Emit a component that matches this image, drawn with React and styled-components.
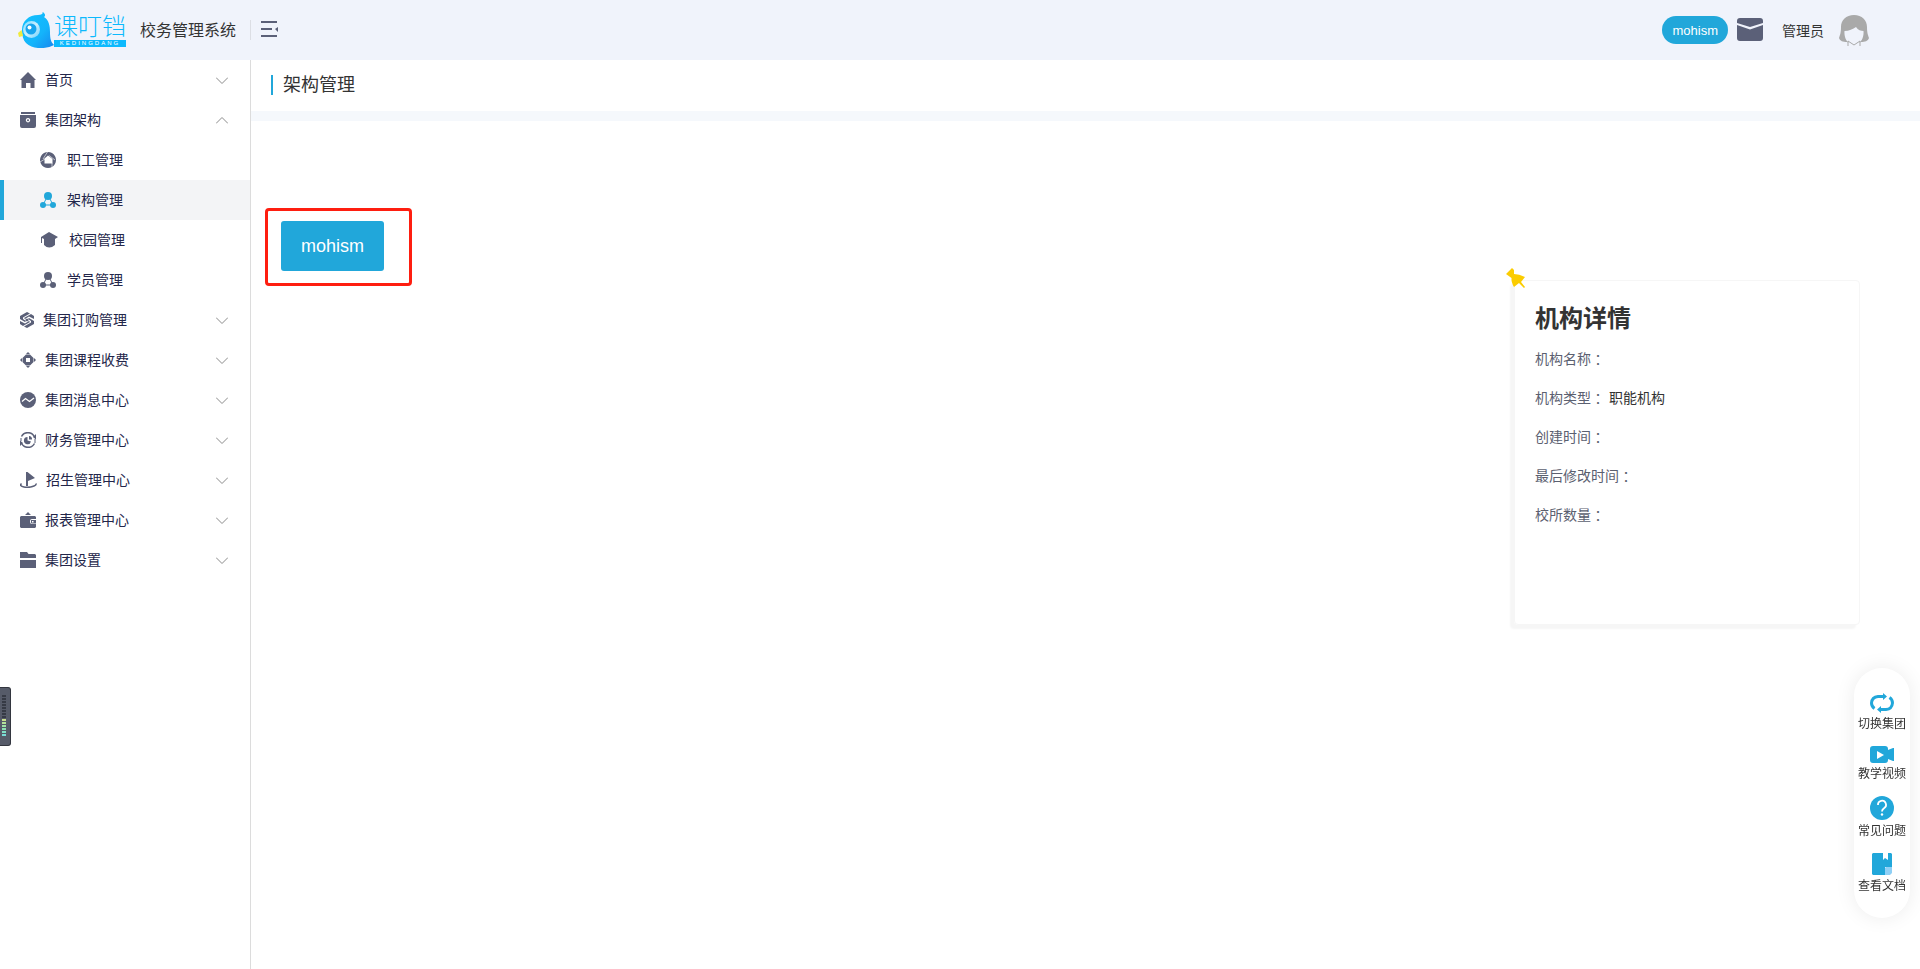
import React, { useState } from 'react'
import styled, { createGlobalStyle } from 'styled-components'

const accent = '#21a7da';
const slate = '#5b6078';

//Styled-components

const GlobalStyle = createGlobalStyle`
    * {
        box-sizing: border-box;
    }
    body {
        margin: 0;
        background: #fff;
        color: #333;
        font-family: 'Liberation Sans', 'Noto Sans CJK SC', sans-serif;
        font-size: 14px;
        font-weight: 400;
    }
    button {
        font: inherit;
        color: inherit;
        border: 0;
        margin: 0;
        padding: 0;
        background: none;
        cursor: pointer;
    }
    a {
        color: inherit;
        text-decoration: none;
    }
    svg {
        display: block;
        flex: none;
    }
`;

const Page = styled.div`
    min-height: 100vh;
    display: flex;
    flex-direction: column;
`;

const Header = styled.header`
    height: 60px;
    padding: 0 51px 0 18px;
    display: flex;
    align-items: center;
    justify-content: space-between;
    background: #f0f3fb;
`;

const HeaderGroup = styled.div`
    display: flex;
    align-items: center;
`;

const Logo = styled.a`
    display: flex;
    align-items: center;
`;

const LogoWords = styled.div`
    display: flex;
    flex-direction: column;
    color: #0db9fd;
`;

const LogoName = styled.span`
    font-size: 24px;
    line-height: 26px;
    font-weight: 300;
`;

const LogoLatin = styled.span`
    height: 7px;
    background: #0db9fd;
    color: #fff;
    font-size: 6px;
    line-height: 7px;
    display: flex;
    justify-content: center;
    letter-spacing: 2px;
`;

const SystemName = styled.span`
    margin-left: 14px;
    padding-top: 2px;
    font-size: 16px;
    line-height: 20px;
`;

const Divider = styled.span`
    width: 1px;
    height: 20px;
    margin: 0 10px 0 14px;
    background: #dcdee4;
`;

const Pill = styled.button`
    height: 28px;
    padding: 0 10px;
    border-radius: 14px;
    background: ${accent};
    color: #fff;
    font-size: 13px;
`;

const IconButton = styled.button`
    margin-left: ${props => props.$gap || 0}px;
    padding-bottom: 2px;
`;

const UserName = styled.span`
    margin: 0 15px 0 19px;
    padding-top: 1px;
    line-height: 20px;
`;

const Body = styled.div`
    flex: 1;
    display: flex;
`;

const Sidebar = styled.nav`
    width: 251px;
    flex: none;
    border-right: 1px solid #dcdcdc;
`;

const MenuItem = styled.button`
    width: 100%;
    height: 40px;
    padding: 0 22px 0 20px;
    display: flex;
    align-items: center;
    color: #23264a;
`;

const MenuText = styled.span`
    flex: 1;
    margin-left: 9px;
    text-align: left;
    line-height: 20px;
`;

const SubItem = styled.a`
    height: 40px;
    padding-left: 36px;
    display: flex;
    align-items: center;
    border-left: 4px solid ${props => (props.$active ? accent : 'transparent')};
    background: ${props => (props.$active ? '#f3f4f6' : 'none')};
    color: #23264a;
    svg {
        color: ${props => (props.$active ? accent : slate)};
    }
    span {
        margin-left: 11px;
        line-height: 20px;
    }
`;

const Main = styled.main`
    flex: 1;
    min-width: 0;
`;

const TitleBar = styled.div`
    height: 61px;
    padding: 15px 20px 0;
    border-bottom: 10px solid #f5f8fc;
`;

const Title = styled.h1`
    margin: 0;
    padding-left: 10px;
    border-left: 2px solid ${accent};
    font-size: 18px;
    line-height: 20px;
    font-weight: 400;
`;

const Content = styled.div`
    padding: 87px 60px 40px 14px;
    display: flex;
    justify-content: space-between;
    align-items: flex-start;
`;

const Highlight = styled.div`
    padding: 10px 25px 12px 13px;
    border: 3px solid #fe1e10;
    border-radius: 4px;
`;

const OrgNode = styled.button`
    height: 50px;
    padding: 0 20px;
    border-radius: 3px;
    background: ${accent};
    color: #fff;
    font-size: 18px;
`;

const Card = styled.section`
    position: relative;
    width: 346px;
    min-height: 345px;
    margin-top: 72px;
    padding: 20px;
    border: 1px solid #f6f6f6;
    border-radius: 4px;
    box-shadow: -4px 4px 2px #f6f6f6;
`;

const Pin = styled.div`
    position: absolute;
    top: -13px;
    left: -9px;
`;

const CardTitle = styled.h2`
    margin: 0 0 12px;
    font-size: 24px;
    line-height: 36px;
    font-weight: 700;
`;

const Details = styled.dl`
    margin: 0;
`;

const DetailRow = styled.div`
    display: flex;
    margin-bottom: 19px;
    line-height: 20px;
`;

const Label = styled.dt`
    display: flex;
    color: #5b6070;
    margin-right: 4px;
`;

// the TC face centres the full-width colon
const Colon = styled.span`
    font-family: 'Noto Sans CJK TC', sans-serif;
`;

const Value = styled.dd`
    margin: 0;
`;

const Tools = styled.aside`
    position: fixed;
    right: 10px;
    bottom: 51px;
    width: 56px;
    padding: 25px 0 23px;
    display: flex;
    flex-direction: column;
    gap: 13px;
    border-radius: 28px;
    background: #fff;
    box-shadow: 0 0 20px rgba(0, 0, 0, 0.08);
`;

const Tool = styled.button`
    display: flex;
    flex-direction: column;
    align-items: center;
    gap: 2px;
    font-size: 12px;
    line-height: 18px;
`;

const Meter = styled.div`
    position: fixed;
    left: 0;
    bottom: 223px;
    width: 11px;
    height: 59px;
    padding: 7px 4px 0 2px;
    display: flex;
    flex-direction: column;
    gap: 1px;
    border: 1px solid #33363f;
    border-left: 0;
    border-radius: 0 3px 3px 0;
    background: #565b69;
`;

const Tick = styled.span`
    height: 2px;
    background: ${props => props.$color};
`;

//ICONS

const Icon = ({ w = 16, h = 16, color = slate, children }) => (
    <svg width={w} height={h} viewBox={`0 0 ${w} ${h}`} fill={color} aria-hidden='true'>{children}</svg>
)

const Bird = () => (
    <svg width='36' height='36' viewBox='0 0 36 36' aria-hidden='true'>
        <defs>
            <linearGradient id='bird' x1='0' y1='0' x2='1' y2='1'>
                <stop offset='0' stopColor='#12c3ff' />
                <stop offset='0.6' stopColor='#14b4fb' />
                <stop offset='1' stopColor='#1886ee' />
            </linearGradient>
            <linearGradient id='face' x1='0' y1='0' x2='1' y2='1'>
                <stop offset='0' stopColor='#7fdcff' />
                <stop offset='0.5' stopColor='#c9efff' />
                <stop offset='1' stopColor='#6fd0fb' />
            </linearGradient>
        </defs>
        <path d='M4 18C4 9 11 3 20 3C24 3 25 2 24.5 0C27 1 28 4 26 5C31 8 32 14 32 20C32 27 33 30 36 33C29 37 15 38 8 31C5 28 4 23 4 18Z' fill='url(#bird)' />
        <circle cx='13.5' cy='17.5' r='8.5' fill='url(#face)' />
        <circle cx='13' cy='17' r='5.5' fill='#16a4ee' />
        <circle cx='11.5' cy='15.5' r='2' fill='#fff' />
        <path d='M3.5 18L0 21L1 25L5 24Z' fill='#f0ea3c' />
    </svg>
)

const FoldIcon = () => (
    <Icon w={17} h={16}>
        <path d='M0 0h16v2H0zM0 7h11v2H0zM0 14h16v2H0zM17 6v5l-3-3z' />
    </Icon>
)

const MailIcon = () => (
    <Icon w={26} h={23}>
        <path d='M3 0h20a3 3 0 0 1 3 3v2L13 9L0 5V3a3 3 0 0 1 3-3zM0 7l13 4.5L26 7v13a3 3 0 0 1-3 3H3a3 3 0 0 1-3-3z' />
    </Icon>
)

const Avatar = () => (
    <Icon w={30} h={31} color='#a9a9a9'>
        <path d='M15 0C7 0 2 5 2 12C2 18 1 20 0 23C1 26 4 27 8 27L10 28C7 26 5 21 5.5 16C10 16 14 14 17 12C19 15 22 16 24.5 16C25 21 23 26 20 28L22 27C26 27 29 26 30 23C29 20 28 18 28 12C28 5 23 0 15 0Z' />
        <path d='M9 26v5M21 26v5M9 26l6 4l6-4' fill='none' stroke='#a9a9a9' />
    </Icon>
)

const HomeIcon = () => (
    <Icon><path d='M8 0L16 8H14.5V16H10.5V11H6V16H1.5V8H0Z' /></Icon>
)

const BoxIcon = () => (
    <Icon>
        <path fillRule='evenodd' d='M1 0h14v2H1zM0 3h16v11a2 2 0 0 1-2 2H2a2 2 0 0 1-2-2zM8 6a2.2 2.2 0 1 0 .01 0z' />
        <circle cx='8' cy='8.2' r='1' />
    </Icon>
)

const StaffIcon = () => (
    <Icon color='currentColor'>
        <path fillRule='evenodd' d='M8 0a8 8 0 1 0 .01 0zM8 3.5L12.5 7v4.5H4.5V6.5z' />
        <path d='M7.5 0L3 7M15 8L9 3.5M12 16v-5M0 10l5-3' stroke='#fff' fill='none' strokeWidth='.6' />
    </Icon>
)

const NodesIcon = () => (
    <Icon color='currentColor'>
        <path d='M6 7L3 13H13L10 7' fill='none' stroke='currentColor' />
        <circle cx='8' cy='4' r='4' />
        <circle cx='3' cy='13' r='3' />
        <circle cx='13' cy='13' r='3' />
    </Icon>
)

const SchoolIcon = () => (
    <Icon w={18} h={16} color='currentColor'>
        <path d='M9 0L18 5L15 7V13Q9 18 4 13V7L2 6V11H1V5Z' />
    </Icon>
)

const OrderIcon = () => (
    <Icon w={14} h={16}>
        <path d='M0 4L7 0L10 1.5L3 5.5V7L6 9L5 10L0 7ZM14 12L7 16L4 14.5L11 10.5V9L8 7L9 6L14 9Z' />
        <path d='M4 6L11 2L14 4V7L9 4.5L5 7ZM10 10L3 14L0 12V9L5 11.5L9 9Z' />
        <path d='M5 8L7 6.5L9 8L7 9.5Z' />
    </Icon>
)

const CourseIcon = () => (
    <Icon>
        <path d='M8 0l2 2H6zM16 8l-2 2V6zM8 16l-2-2h4zM0 8l2-2v4z' />
        <path fillRule='evenodd' d='M6 2.5h4l3.5 3.5v4l-3.5 3.5H6L2.5 10V6zM6 6v4h4V6z' />
    </Icon>
)

const MessageIcon = () => (
    <Icon>
        <circle cx='8' cy='8' r='8' />
        <path d='M2 9.5L5.5 6.5L9.5 9.5L14 6' fill='none' stroke='#fff' strokeWidth='1.3' />
    </Icon>
)

const FinanceIcon = () => (
    <Icon>
        <path d='M1.5 4.5A7.2 7.2 0 0 1 14.5 5M14.5 11.5A7.2 7.2 0 0 1 1.5 11' fill='none' stroke={slate} strokeWidth='1.5' />
        <path d='M16 2v5.5L13 5zM0 14V8.500L3 11z' />
        <path d='M1 6v3M15 7v4' stroke={slate} />
        <path d='M7.5 5v3.5l3.5 1A3.6 3.6 0 1 1 7.5 5zM9 4A3 3 0 0 1 12 7.5L9 7.5z' />
    </Icon>
)

const FlagIcon = () => (
    <Icon w={17} h={16}>
        <path d='M6 0h1.5l7.5 6l-7 3v5H6z' />
        <path d='M1.5 11.5Q-1 14 4 15Q9 16 14 14Q16.5 13 16 11.5' fill='none' stroke={slate} strokeWidth='1.6' />
    </Icon>
)

const WalletIcon = () => (
    <Icon>
        <path d='M8 0l3 3H5zM1 4h14l1 1v2h-4a2 2 0 0 0-2 2v1a2 2 0 0 0 2 2h4v3l-1 1H1l-1-1V5z' />
        <path fillRule='evenodd' d='M11 8h5v3.5h-4a1 1 0 0 1-1-1zM12 9v1.5h1.5V9z' />
    </Icon>
)

const FolderIcon = () => (
    <Icon><path d='M0 0h7l1.5 2H15l1 1v3H0zM0 8h16v8H0z' /></Icon>
)

const Chevron = ({ up }) => (
    <svg width='12' height='7' viewBox='0 0 12 7' fill='none' stroke='#8a8a8a' aria-hidden='true'>
        <path d={up ? 'M0 6.5L6 .5L12 6.5' : 'M0 .5L6 6.5L12 .5'} />
    </svg>
)

const PinIcon = () => (
    <Icon w={20} h={20} color='#fbcc00'>
        <path d='M6 0L8 2V6Q13 6 19 9L15 14L19 19L18 20L13 15L8 19Q5 14 5.5 10L0 6Z' />
    </Icon>
)

const SwitchIcon = () => (
    <Icon w={24} h={20} color={accent}>
        <path d='M4.5 15.5Q1.5 13.5 1.5 10Q2 4 8 3.5H14M19.5 4.5Q22.5 6.5 22.5 10Q22 16 16 16.5H10' fill='none' stroke={accent} strokeWidth='3' />
        <path d='M13 0l4 3.5L13 7zM11 13v7l-4-3.5z' />
    </Icon>
)

const VideoIcon = () => (
    <Icon w={24} h={17} color={accent}>
        <path fillRule='evenodd' d='M3 0h12a3 3 0 0 1 3 3v1l5-2h1v13h-1l-5-2v1a3 3 0 0 1-3 3H3a3 3 0 0 1-3-3V3a3 3 0 0 1 3-3zM7 5v8l7-4z' />
    </Icon>
)

const HelpIcon = () => (
    <Icon w={24} h={24} color={accent}>
        <circle cx='12' cy='12' r='12' />
        <path d='M8 9a4 4 0 1 1 6 3.2Q12 13.5 12 15.5' fill='none' stroke='#fff' strokeWidth='1.8' />
        <circle cx='12' cy='18.5' r='1.2' fill='#fff' />
    </Icon>
)

const DocIcon = () => (
    <Icon w={20} h={22} color={accent}>
        <path d='M1 0h10v7l2-2l3 2V0h3l1 1v13h-7v8H1l-1-1V1z' />
        <path d='M14 14h6v6l-2 2h-5v-7z' fill='#8fd0f6' />
    </Icon>
)

//DATA

const menu = [
    { text: '首页', icon: <HomeIcon /> },
    {
        text: '集团架构',
        icon: <BoxIcon />,
        children: [
            { text: '职工管理', icon: <StaffIcon /> },
            { text: '架构管理', icon: <NodesIcon /> },
            { text: '校园管理', icon: <SchoolIcon /> },
            { text: '学员管理', icon: <NodesIcon /> },
        ],
    },
    { text: '集团订购管理', icon: <OrderIcon /> },
    { text: '集团课程收费', icon: <CourseIcon /> },
    { text: '集团消息中心', icon: <MessageIcon /> },
    { text: '财务管理中心', icon: <FinanceIcon /> },
    { text: '招生管理中心', icon: <FlagIcon /> },
    { text: '报表管理中心', icon: <WalletIcon /> },
    { text: '集团设置', icon: <FolderIcon /> },
];

const details = [
    ['机构名称', ''],
    ['机构类型', '职能机构'],
    ['创建时间', ''],
    ['最后修改时间', ''],
    ['校所数量', ''],
];

const tools = [
    { text: '切换集团', icon: <SwitchIcon /> },
    { text: '教学视频', icon: <VideoIcon /> },
    { text: '常见问题', icon: <HelpIcon /> },
    { text: '查看文档', icon: <DocIcon /> },
];

const ticks = [
    ...Array(8).fill('#363a45'),
    '#c9e08c', '#b5e39a', '#9fe3a6', '#8ce2b4', '#7fe0c6', '#78dcd8',
];

export default function App() {

    const [open, setOpen] = useState('集团架构')
    const [active, setActive] = useState('架构管理')

    return (
        <Page>
            <GlobalStyle />
            <Header>
                <HeaderGroup>
                    <Logo href='#'>
                        <Bird />
                        <LogoWords>
                            <LogoName>课叮铛</LogoName>
                            <LogoLatin>KEDINGDANG</LogoLatin>
                        </LogoWords>
                    </Logo>
                    <SystemName>校务管理系统</SystemName>
                    <Divider />
                    <IconButton aria-label='收起菜单'><FoldIcon /></IconButton>
                </HeaderGroup>
                <HeaderGroup>
                    <Pill>mohism</Pill>
                    <IconButton $gap={9} aria-label='消息'><MailIcon /></IconButton>
                    <UserName>管理员</UserName>
                    <Avatar />
                </HeaderGroup>
            </Header>
            <Body>
                <Sidebar>
                    {menu.map(item => (
                        <React.Fragment key={item.text}>
                            <MenuItem onClick={() => setOpen(open === item.text ? '' : item.text)}>
                                {item.icon}
                                <MenuText>{item.text}</MenuText>
                                <Chevron up={open === item.text} />
                            </MenuItem>
                            {open === item.text && item.children && item.children.map(sub => (
                                <SubItem
                                    key={sub.text}
                                    href='#'
                                    $active={active === sub.text}
                                    onClick={() => setActive(sub.text)}
                                >
                                    {sub.icon}
                                    <span>{sub.text}</span>
                                </SubItem>
                            ))}
                        </React.Fragment>
                    ))}
                </Sidebar>
                <Main>
                    <TitleBar>
                        <Title>架构管理</Title>
                    </TitleBar>
                    <Content>
                        <Highlight>
                            <OrgNode>mohism</OrgNode>
                        </Highlight>
                        <Card>
                            <Pin><PinIcon /></Pin>
                            <CardTitle>机构详情</CardTitle>
                            <Details>
                                {details.map(([label, value]) => (
                                    <DetailRow key={label}>
                                        <Label>{label}<Colon>：</Colon></Label>
                                        <Value>{value}</Value>
                                    </DetailRow>
                                ))}
                            </Details>
                        </Card>
                    </Content>
                </Main>
            </Body>
            <Tools>
                {tools.map(tool => (
                    <Tool key={tool.text}>
                        {tool.icon}
                        {tool.text}
                    </Tool>
                ))}
            </Tools>
            <Meter>
                {ticks.map((color, i) => <Tick key={i} $color={color} />)}
            </Meter>
        </Page>
    )
}
